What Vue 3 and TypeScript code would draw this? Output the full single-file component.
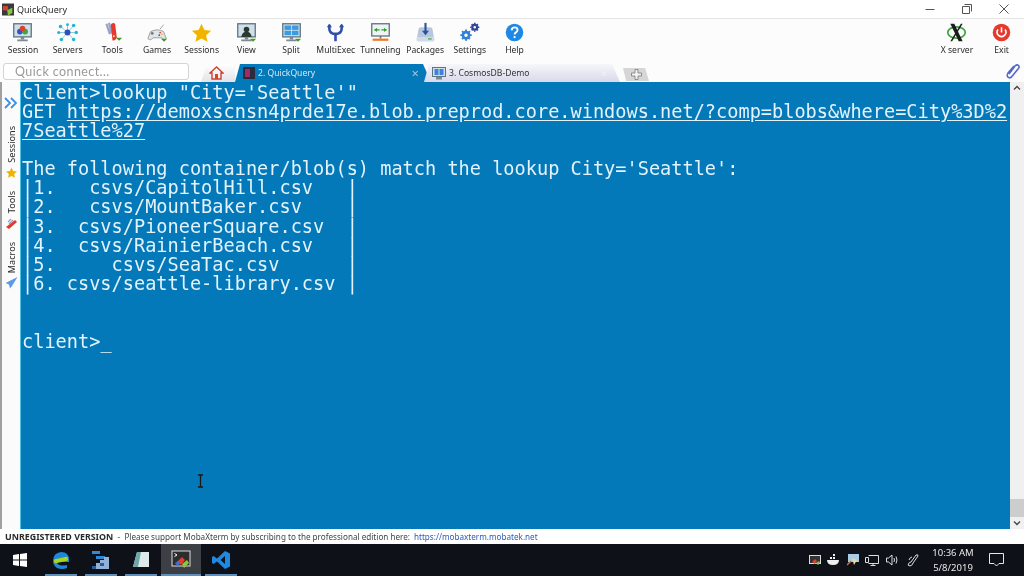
<script setup lang="ts">
interface Tool { label: string; icon: string }

const monitor = (inner: string) =>
  `<rect x="3" y="2" width="20" height="15" fill="#cfe0ea" stroke="#5f7480" stroke-width="1.5"/>${inner}<rect x="11" y="17" width="4" height="3" fill="#7b8a94"/><rect x="7" y="20" width="12" height="2" fill="#7b8a94"/>`
const arrow = '<path d="M17 19h7l-3.5 3.5z" fill="#3f9a1e"/>'

const tools: Tool[] = [
  { label: 'Session', icon: monitor('<circle cx="10" cy="11" r="3.2" fill="#2f55c8"/><circle cx="16" cy="11" r="3.2" fill="#3aa83a"/><circle cx="13" cy="7.5" r="3.2" fill="#e23d2d"/>') },
  { label: 'Servers', icon: '<g stroke="#7fc4e0" stroke-width="1"><path d="M13 12 5 5M13 12 20 4M13 12 23 12M13 12 20 20M13 12 6 20M13 12 3 12M13 12 13 3"/></g><circle cx="13" cy="12" r="3.4" fill="#2f4fb5"/><g fill="#23b5cf"><circle cx="5" cy="5" r="2"/><circle cx="20" cy="4" r="2"/><circle cx="23" cy="12" r="2"/><circle cx="20" cy="20" r="2"/><circle cx="6" cy="20" r="2"/><circle cx="3" cy="12" r="1.8"/><circle cx="13" cy="3" r="1.6"/></g>' },
  { label: 'Tools', icon: '<path d="M6 2l4 12M9 1l3 12" stroke="#9aa3c8" stroke-width="2.5"/><path d="M11 3q2-3 5-1l2 16q-2 4-5 3z" fill="#e4392b"/><circle cx="14.5" cy="16" r="1" fill="#fff"/><path d="M17 18h7l-3.5 3.5z" fill="#3f9a1e"/>' },
  { label: 'Games', icon: '<path d="M5 11q8-4 15 0l3 8q-2 3-5-1H8q-3 4-6 1z" fill="#e3e6e8" stroke="#8d979d"/><path d="M16 8l4-5" stroke="#8d979d"/><circle cx="7" cy="13" r="1.6" fill="#6f7a80"/><circle cx="16" cy="12" r="1" fill="#e23d2d"/><circle cx="18" cy="14" r="1" fill="#e6c22a"/><circle cx="15" cy="15" r="1" fill="#2f55c8"/>' + arrow },
  { label: 'Sessions', icon: '<path d="M13 2l3.300 7 7.700.9-5.700 5.200 1.600 7.600L13 18.900 6.100 22.700l1.600-7.600L2 9.900 9.700 9z" fill="#f0b400"/>' },
  { label: 'View', icon: monitor('<circle cx="13" cy="8.500" r="3.200" fill="#2a3a2e"/><path d="M7 17q1-6 6-6t6 6z" fill="#2a3a2e"/>') + arrow },
  { label: 'Split', icon: monitor('<rect x="5" y="4" width="7.500" height="5" fill="#3b9ae0"/><rect x="13.500" y="4" width="7.500" height="5" fill="#3b9ae0"/><rect x="5" y="10" width="7.500" height="5" fill="#3b9ae0"/><rect x="13.500" y="10" width="7.500" height="5" fill="#3b9ae0"/>') + arrow },
  { label: 'MultiExec', icon: '<path d="M6 3v5q0 5 7 6 7-1 7-6V3M13 12v10" fill="none" stroke="#3250a8" stroke-width="3"/><path d="M3 6l3-4 3 4zM17 6l3-4 3 4z" fill="#3250a8"/>' },
  { label: 'Tunneling', icon: '<rect x="3" y="2" width="20" height="14" fill="#eef3f4" stroke="#5f7480" stroke-width="1.5"/><path d="M6 9h6M14 9h6" stroke="#2ea02e" stroke-width="1.6"/><path d="M9 6.500 6 9l3 2.500zM17 6.500 20 9l-3 2.500z" fill="#2ea02e"/><rect x="12" y="16" width="2" height="3" fill="#777"/><rect x="4" y="19" width="18" height="2.500" fill="#f07820"/>' },
  { label: 'Packages', icon: '<path d="M5 8q0-2 3-2h10q3 0 3 2l2 12q0 2-2 2H5q-2 0-2-2z" fill="#b7c8de"/><rect x="3" y="17" width="20" height="5" rx="1" fill="#cfdbe8"/><path d="M13 1v11" stroke="#2c4f9e" stroke-width="2.400"/><path d="M9 10h8l-4 5z" fill="#2c4f9e"/><rect x="16" y="18.500" width="4" height="1.600" fill="#4caf50"/>' },
  { label: 'Settings', icon: '<g fill="none" stroke="#2f80d8" stroke-width="3"><circle cx="9" cy="15" r="3.500"/></g><g stroke="#2f80d8" stroke-width="2.200"><path d="M9 8.500v2M9 19.500v2M2.500 15h2M13.500 15h2M4.500 10.500l1.400 1.400M12 18l1.400 1.400M13.500 10.500 12 12M6 18l-1.500 1.500"/></g><g fill="none" stroke="#33449c" stroke-width="2.600"><circle cx="19" cy="6" r="2.800"/></g><g stroke="#33449c" stroke-width="1.800"><path d="M19 .8v1.600M19 9.600v1.600M13.800 6h1.600M22.600 6h1.600M15.400 2.400l1 1M21.600 8.600l1 1M22.600 2.400l-1 1M16.400 8.600l-1 1"/></g>' },
  { label: 'Help', icon: '<circle cx="13" cy="12" r="10" fill="#1e88e5"/><path d="M9.700 9.500q.3-3.300 3.500-3.300 3.300 0 3.300 2.900 0 1.700-1.800 2.700-1.600.9-1.600 2.600" fill="none" stroke="#fff" stroke-width="2.100"/><circle cx="13.100" cy="17.200" r="1.300" fill="#fff"/>' },
]

const rightTools: Tool[] = [
  { label: 'X server', icon: '<ellipse cx="13" cy="12" rx="10" ry="6.500" fill="none" stroke="#3ea83a" stroke-width="2"/><path d="M6 2h4.500L20 22h-4.500z" fill="#1c1c1c"/><path d="M18 2h2L8 22H6z" fill="#1c1c1c"/>' },
  { label: 'Exit', icon: '<circle cx="13" cy="12" r="10" fill="#e5392c"/><path d="M9 8.500a5 5 0 1 0 8 0" fill="none" stroke="#fff" stroke-width="1.800"/><path d="M13 6v6" stroke="#fff" stroke-width="1.800"/>' },
]

const results = [
  '|1.   csvs/CapitolHill.csv   |',
  '|2.   csvs/MountBaker.csv    |',
  '|3.  csvs/PioneerSquare.csv  |',
  '|4.  csvs/RainierBeach.csv   |',
  '|5.     csvs/SeaTac.csv      |',
  '|6. csvs/seattle-library.csv |',
]

const pinned = [
  { cls: 'edge', on: false },
  { cls: 'chart', on: false },
  { cls: 'note', on: false },
  { cls: 'moba', on: true },
  { cls: 'code', on: false },
]
</script>

<template>
  <div class="screen">
    <header class="titlebar">
      <svg class="app-logo" width="12" height="13" viewBox="0 0 14 14">
        <rect width="14" height="14" fill="#3a3a3a" />
        <path d="M1 3h6v5H1z" fill="#d8432f" />
        <path d="M6 8l6-3v6l-5 3z" fill="#8cc63f" />
      </svg>
      <span class="app-title">QuickQuery</span>
      <span class="win-controls">
        <svg width="12" height="12" viewBox="0 0 12 12"><path d="M1.500 6.500h9" stroke="#555" /></svg>
        <svg width="12" height="12" viewBox="0 0 12 12"><path d="M3.500 1.500h7v7M1.500 3.500h7v7h-7z" fill="#fff" stroke="#555" /></svg>
        <svg width="12" height="12" viewBox="0 0 12 12"><path d="M1.500 1.500l9 9M10.500 1.500l-9 9" stroke="#555" /></svg>
      </span>
    </header>

    <nav class="toolbar">
      <div v-for="t in tools" :key="t.label" class="tool">
        <svg width="23" height="21" viewBox="0 0 26 24" v-html="t.icon" />
        <span>{{ t.label }}</span>
      </div>
      <div class="tool-spacer" />
      <div v-for="t in rightTools" :key="t.label" class="tool">
        <svg width="23" height="21" viewBox="0 0 26 24" v-html="t.icon" />
        <span>{{ t.label }}</span>
      </div>
    </nav>

    <div class="tabrow">
      <div class="quick">Quick connect...</div>
      <div class="tab-home">
        <svg width="15" height="14" viewBox="0 0 15 14">
          <path d="M7.500 1 1 7h2v6h9V7h2z" fill="#f4f4f4" stroke="#c9442f" stroke-width="1.400" />
          <rect x="6" y="8" width="3" height="5" fill="#d8432f" />
        </svg>
      </div>
      <div class="tab tab-active">
        <svg width="12" height="12" viewBox="0 0 12 12">
          <rect width="12" height="12" fill="#2b2b3c" />
          <rect x="2" y="2" width="5" height="8" fill="#a02a6a" />
        </svg>
        <span>2. QuickQuery</span>
        <i>×</i>
      </div>
      <div class="tab tab-idle">
        <svg width="14" height="13" viewBox="0 0 14 13">
          <rect x=".5" y=".5" width="13" height="9" fill="#cfe0ea" stroke="#5f7480" />
          <rect x="2.500" y="2" width="4" height="6" fill="#3b82d8" />
          <rect x="7.500" y="2" width="4" height="6" fill="#3b82d8" />
          <rect x="4" y="10" width="6" height="2.500" fill="#7b8a94" />
        </svg>
        <span>3. CosmosDB-Demo</span>
        <i>×</i>
      </div>
      <div class="tab-add">
        <svg width="11" height="11" viewBox="0 0 11 11">
          <path d="M4 .5h3v3.500h3.500v3H7v3.500H4V7H.5V4H4z" fill="#f2f2f2" stroke="#8c8c8c" />
        </svg>
      </div>
      <svg class="clip" width="14" height="16" viewBox="0 0 14 16">
        <path d="M3 11 9 3q2-2 3.500-.5T12 6l-6.500 8q-2 1.500-3.500.2T2 10l6-7" fill="none" stroke="#5468c8" stroke-width="1.600" />
      </svg>
    </div>

    <main class="workspace">
      <aside class="side">
        <svg class="side-chevrons" width="14" height="12" viewBox="0 0 14 12">
          <path d="M1 1l5 5-5 5M7 1l5 5-5 5" fill="none" stroke="#3f8fe0" stroke-width="1.800" />
        </svg>
        <span class="vlabel">Sessions</span>
        <svg width="13" height="13" viewBox="0 0 26 24">
          <path d="M13 2l3.300 7 7.700.9-5.700 5.200 1.600 7.600L13 18.900 6.100 22.700l1.600-7.600L2 9.900 9.700 9z" fill="#f0b400" />
        </svg>
        <span class="vlabel">Tools</span>
        <svg width="13" height="13" viewBox="0 0 13 13">
          <path d="M1 11l9-7 2 2-8 7z" fill="#e4392b" />
          <path d="M3 6l3-3M4 8l4-4" stroke="#8f9bd0" stroke-width="1.200" />
        </svg>
        <span class="vlabel">Macros</span>
        <svg width="13" height="13" viewBox="0 0 13 13">
          <path d="M12.500 1 .5 7l3.500 1.500 1 4 2-2.500z" fill="#5b9be6" />
        </svg>
      </aside>

      <section class="terminal">
        <div>client&gt;lookup "City='Seattle'"</div>
        <div>GET <a>https://demoxscnsn4prde17e.blob.preprod.core.windows.net/?comp=blobs&amp;where=City%3D%2</a></div>
        <div><a>7Seattle%27</a></div>
        <div>&nbsp;</div>
        <div>The following container/blob(s) match the lookup City='Seattle':</div>
        <div v-for="r in results" :key="r">{{ r }}</div>
        <div>&nbsp;</div>
        <div>&nbsp;</div>
        <div>client&gt;<span class="caret">_</span></div>
        <svg class="ibeam" width="7" height="14" viewBox="0 0 7 14">
          <path d="M1 1h5M1 13h5M3.500 1v12" fill="none" stroke="#1a1a1a" stroke-width="1.300" />
        </svg>
      </section>

      <div class="scrollbar">
        <svg width="14" height="12" viewBox="0 0 14 12"><path d="M4 7.500 7 4.500l3 3" fill="none" stroke="#444" stroke-width="1.300" /></svg>
        <div class="scroll-track"><div class="scroll-thumb" /></div>
        <svg width="14" height="12" viewBox="0 0 14 12"><path d="M4 4.500 7 7.500l3-3" fill="none" stroke="#444" stroke-width="1.300" /></svg>
      </div>
    </main>

    <footer class="status">
      <b>UNREGISTERED VERSION</b>
      <span>&nbsp; - &nbsp;Please support MobaXterm by subscribing to the professional edition here:</span>
      <a>https://mobaxterm.mobatek.net</a>
    </footer>

    <div class="taskbar">
      <svg class="start" width="14" height="14" viewBox="0 0 14 14">
        <path d="M0 2l6-1v5.500H0zM7 1l7-1v6.500H7zM0 7.500h6V13l-6-1zM7 7.500h7V14l-7-1z" fill="#fff" />
      </svg>
      <div class="pins">
        <div v-for="p in pinned" :key="p.cls" class="pin" :class="{ 'pin-on': p.on }">
          <svg v-if="p.cls === 'edge'" width="20" height="20" viewBox="0 0 20 20">
            <path d="M2 11q0-8 8-9 8 0 8 8v2H6q1 5 10 3v3q-5 2-10 0-4-3-4-7z" fill="#1e88d8" />
            <rect x="3" y="8" width="14" height="4" rx="1" transform="rotate(-12 10 10)" fill="#a8d422" />
          </svg>
          <svg v-else-if="p.cls === 'chart'" width="20" height="20" viewBox="0 0 20 20">
            <path d="M1 1h8v3H1zM5 6h9v3H5z" fill="#2d8ad6" />
            <path d="M1 19v-3h4v-3h4v-3h4V7h5v12z" fill="#8fb2d6" />
            <path d="M1 16h4v3H1zM9 13h4v3H9z" fill="#2b5d9a" />
          </svg>
          <svg v-else-if="p.cls === 'note'" width="20" height="20" viewBox="0 0 20 20">
            <path d="M6 2h12v15H2z" fill="#dfe9e9" />
            <path d="M6 2 2 17h5l3-15z" fill="#6fa7a8" />
          </svg>
          <svg v-else-if="p.cls === 'moba'" width="20" height="20" viewBox="0 0 20 20">
            <rect x="1" y="1" width="18" height="15" fill="#2d2d2d" stroke="#ddd" />
            <path d="M3.500 3.500 6 5 3.500 6.500" fill="none" stroke="#fff" />
            <path d="M6 12l5-5 3 3-4 5z" fill="#e23d2d" />
            <path d="M11 14l5-4 2 3-5 5z" fill="#8cc63f" />
            <path d="M4 13l3-2 2 3-3 2z" fill="#3a6fd8" />
          </svg>
          <svg v-else width="20" height="20" viewBox="0 0 20 20">
            <path d="M14 1l5 2.500v13L14 19 6 11.500 2.500 14 1 13V7l1.500-1L6 8.500zM14 6l-4.500 4 4.500 4z" fill="#1f88e0" />
          </svg>
        </div>
      </div>
      <div class="tray">
        <svg width="12" height="12" viewBox="0 0 12 12">
          <rect x="0" y="1" width="12" height="9" fill="#ddd" />
          <rect x="1" y="2" width="10" height="7" fill="#333" />
          <path d="M3 8l3-3 2 2-2 3z" fill="#e23d2d" />
          <path d="M7 9l3-2 1 2-2 2z" fill="#8cc63f" />
        </svg>
        <svg width="13" height="12" viewBox="0 0 13 12">
          <path d="M0 6h12q0 5-6 5T0 6zM3 3h2v2H3zM6 3h2v2H6zM6 0h2v2H6z" fill="#eee" />
        </svg>
        <svg width="12" height="12" viewBox="0 0 12 12">
          <rect x="1" y="0" width="11" height="8" fill="#a8cbe6" />
          <path d="M5 4l5 2-3 5z" fill="#e8d8a0" />
          <path d="M0 11l4-4" stroke="#e07030" stroke-width="1.500" />
        </svg>
        <svg width="14" height="12" viewBox="0 0 14 12">
          <path d="M3.500 1.500h10v8h-10M8 9.500v2M5.500 11.500h5M.5 3.500h3v5h-3z" fill="none" stroke="#ddd" />
        </svg>
        <svg width="13" height="12" viewBox="0 0 13 12">
          <path d="M.5 4v4h2L6 11V1L2.500 4zM8 4q1 2 0 4M10 2.500q2 3.500 0 7" fill="none" stroke="#ddd" />
        </svg>
        <svg class="tray-pen" width="12" height="14" viewBox="0 0 12 14">
          <path d="M1 12q1-3 3-3l5-7q2-1 2 1L6 10q0 2-3 3zM5 4q-2 0-3 3" fill="none" stroke="#ddd" />
        </svg>
      </div>
      <div class="clock"><span>10:36 AM</span><span>5/8/2019</span></div>
      <svg class="notify" width="15" height="14" viewBox="0 0 15 14">
        <path d="M.5.500h14v10h-4.500l-2.500 2.500-2.500-2.500H.5z" fill="none" stroke="#e8e8e8" />
      </svg>
    </div>
  </div>
</template>

<style>
html, body { margin: 0; background: #fff; }
</style>

<style scoped>
.screen {
  width: 1024px;
  height: 576px;
  display: flex;
  flex-direction: column;
  overflow: hidden;
  font-family: "Noto Sans", sans-serif;
  color: #2a2a2a;
  background: #fcfcfc;
  filter: blur(0.3px);
}
.titlebar {
  height: 18px;
  display: flex;
  align-items: center;
  padding-left: 2px;
  background: #fff;
  border-bottom: 1px solid #e6e6e6;
  font-size: 9px;
  flex: none;
}
.app-logo { margin-right: 3px; }
.win-controls {
  margin-left: auto;
  display: flex;
  gap: 25px;
  padding-right: 14px;
}
.toolbar {
  height: 42px;
  flex: none;
  display: flex;
  padding-left: 0.6px;
}
.tool {
  width: 44.7px;
  display: flex;
  flex-direction: column;
  align-items: center;
  padding-top: 3px;
  gap: 1px;
  font-size: 8.6px;
  line-height: 12px;
  white-space: nowrap;
}
.tool-spacer { flex: 1; }
.tabrow {
  height: 21px;
  flex: none;
  display: flex;
  align-items: flex-end;
  position: relative;
  padding-left: 3px;
}
.quick {
  width: 173px;
  height: 15px;
  margin-bottom: 2px;
  padding-left: 11px;
  border: 1px solid #d4d4d4;
  border-radius: 3px;
  background: #fff;
  color: #9a9a9a;
  font-family: Lato, sans-serif;
  font-size: 12.5px;
  letter-spacing: 0.4px;
  line-height: 15px;
  margin-right: 12px;
}
.tab-home {
  width: 34px;
  height: 18px;
  padding-right: 3px;
  box-sizing: border-box;
  display: flex;
  align-items: center;
  justify-content: center;
  background: linear-gradient(#fff, #e3e3e8);
  clip-path: polygon(18% 0, 100% 0, 100% 100%, 0 100%);
}
.tab {
  height: 18px;
  width: 196px;
  display: flex;
  align-items: center;
  font-size: 8.6px;
  padding-left: 8px;
  box-sizing: border-box;
  clip-path: polygon(5px 0, calc(100% - 8px) 0, 100% 100%, 0 100%);
}
.tab span { margin-left: 3px; flex: 1; }
.tab i { font-style: normal; font-size: 13px; margin-right: 12px; }
.tab-active { background: #0479ba; color: #d5e8f4; }
.tab-active i { color: #9cc8e2; }
.tab-idle {
  margin-left: -7px;
  background: linear-gradient(#f6f6fa, #d9d9ea);
  color: #333;
}
.tab-idle i { color: #efeff5; }
.tab-add {
  margin-left: 3px;
  margin-bottom: 1px;
  width: 26px;
  height: 13px;
  display: flex;
  align-items: center;
  justify-content: center;
  background: #d6d6d6;
  clip-path: polygon(0 0, 85% 0, 100% 100%, 12% 100%);
}
.clip { position: absolute; right: 4px; bottom: 3px; }
.workspace {
  flex: 1;
  min-height: 0;
  display: flex;
}
.side {
  width: 20px;
  flex: none;
  display: flex;
  flex-direction: column;
  align-items: center;
  padding-top: 15px;
  box-sizing: border-box;
  border-left: 2px solid #a0a0a0;
  background: #fbfbfb;
}
.side-chevrons { margin-bottom: 17px; }
.vlabel {
  writing-mode: vertical-rl;
  transform: rotate(180deg);
  font-size: 9.1px;
  line-height: 11px;
  margin-bottom: 3px;
}
.vlabel + svg { margin-bottom: 12.5px; }
.terminal {
  flex: 1;
  position: relative;
  box-sizing: border-box;
  padding: 0.5px 0 0 1px;
  background: #0479ba;
  border-left: 1px solid #52c1e2;
  color: #e4f2fa;
  font-family: "DejaVu Sans Mono", monospace;
  font-size: 18.6px;
  line-height: 19.15px;
  white-space: pre;
  overflow: hidden;
}
.terminal a { text-decoration: underline; text-underline-offset: 2px; }
.ibeam { position: absolute; left: 176px; top: 392px; }
.scrollbar {
  width: 14px;
  flex: none;
  display: flex;
  flex-direction: column;
  background: #f0f0f0;
}
.scroll-track { flex: 1; display: flex; flex-direction: column; justify-content: flex-end; }
.scroll-thumb { height: 18px; background: #cdcdcd; }
.status {
  height: 15px;
  flex: none;
  display: flex;
  align-items: center;
  padding-left: 5px;
  box-sizing: border-box;
  background: #fff;
  font-size: 8.15px;
  white-space: pre;
  color: #444;
}
.status b { color: #2a2a2a; font-size: 8.9px; }
.status a { color: #2a5bb8; margin-left: 4px; }
.taskbar {
  height: 32px;
  flex: none;
  display: flex;
  align-items: center;
  background: #0e1218;
  color: #e8e8e8;
}
.start { margin-left: 13px; }
.pins { display: flex; margin-left: 14px; height: 100%; }
.pin {
  width: 40px;
  height: 100%;
  box-sizing: border-box;
  display: flex;
  align-items: center;
  justify-content: center;
  position: relative;
}
.pin::after {
  content: "";
  position: absolute;
  left: 4px;
  right: 4px;
  bottom: 0;
  height: 2px;
  background: #5d8fbf;
}
.pin-on { background: #3c3f43; }
.pin-on::after { left: 0; right: 0; }
.tray {
  margin-left: auto;
  display: flex;
  align-items: center;
  gap: 6.5px;
}
.tray-pen { margin-left: 2px; }
.clock {
  width: 62px;
  margin-left: 3px;
  display: flex;
  flex-direction: column;
  align-items: center;
  font-size: 9.5px;
  line-height: 15px;
}
.notify { margin: 0 20px 0 5px; }
</style>
